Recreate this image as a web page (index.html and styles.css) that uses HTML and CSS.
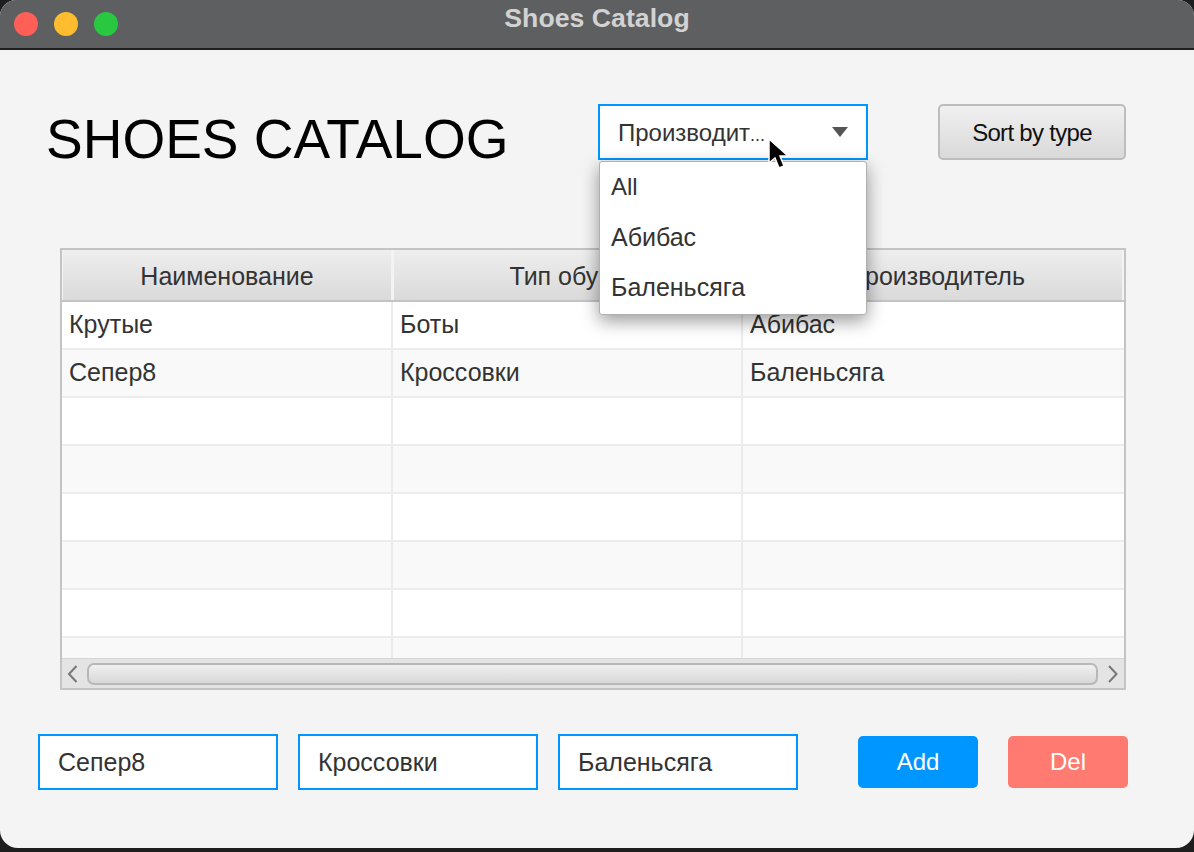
FILE: index.html
```html
<!DOCTYPE html>
<html>
<head>
<meta name="viewport" content="width=device-width, initial-scale=1.0">
<link rel="stylesheet" href="styles.css">
<title>Shoes Catalog</title>
</head>
<body>
<div class="window">
  <div class="titlebar">
    <div class="lights">
      <span class="light red"></span>
      <span class="light yellow"></span>
      <span class="light green"></span>
    </div>
    <div class="wintitle">Shoes Catalog</div>
  </div>
  <div class="content">
    <div class="top">
      <h1 class="heading">SHOES CATALOG</h1>
      <div class="combo">
        <span class="combo-text">Производит<span class="dots">...</span></span>
        <span class="arrow"></span>
        <div class="popup">
          <div class="popup-item latin">All</div>
          <div class="popup-item">Абибас</div>
          <div class="popup-item">Баленьсяга</div>
        </div>
        <svg class="cursor" width="24" height="36" viewBox="0 0 24 36">
          <path d="M3 1 L3 25 L9 20 L13 30 L18 28 L14 18 L22 18 Z" fill="#000" stroke="#fff" stroke-width="1.5"/>
        </svg>
      </div>
      <button class="sort">Sort by type</button>
    </div>
    <div class="table">
      <div class="thead">
        <div class="th c1">Наименование</div>
        <div class="th c2">Тип обуви</div>
        <div class="th c3">Производитель</div>
      </div>
      <div class="tbody">
        <div class="row"><div class="td c1">Крутые</div><div class="td c2">Боты</div><div class="td c3">Абибас</div></div>
        <div class="row odd"><div class="td c1">Сепер8</div><div class="td c2">Кроссовки</div><div class="td c3">Баленьсяга</div></div>
        <div class="row"><div class="td c1"></div><div class="td c2"></div><div class="td c3"></div></div>
        <div class="row odd"><div class="td c1"></div><div class="td c2"></div><div class="td c3"></div></div>
        <div class="row"><div class="td c1"></div><div class="td c2"></div><div class="td c3"></div></div>
        <div class="row odd"><div class="td c1"></div><div class="td c2"></div><div class="td c3"></div></div>
        <div class="row"><div class="td c1"></div><div class="td c2"></div><div class="td c3"></div></div>
        <div class="row odd"><div class="td c1"></div><div class="td c2"></div><div class="td c3"></div></div>
      </div>
      <div class="scrollbar">
        <svg class="sb-arrow" width="25" height="28" viewBox="0 0 25 28"><path d="M14.500 6 L7 14 L14.500 22" fill="none" stroke="#777" stroke-width="2"/></svg>
        <div class="thumb"></div>
        <svg class="sb-arrow" width="26" height="28" viewBox="0 0 26 28"><path d="M11 6 L18.500 14 L11 22" fill="none" stroke="#777" stroke-width="2"/></svg>
      </div>
    </div>
    <div class="bottom">
      <div class="field">Сепер8</div>
      <div class="field">Кроссовки</div>
      <div class="field">Баленьсяга</div>
      <button class="btn add">Add</button>
      <button class="btn del">Del</button>
    </div>
  </div>
</div>
</body>
</html>
```

FILE: styles.css
```css
html, body {
  margin: 0;
  height: 100%;
  background: #1e1e1e;
}
body {
  width: 1194px;
  height: 852px;
  overflow: hidden;
  font-family: "Liberation Sans", Arial, sans-serif;
  font-size: 25px;
  color: #333;
}
.window {
  height: 848px;
  display: flex;
  flex-direction: column;
  border-radius: 16px 16px 18px 18px;
  overflow: hidden;
  background: #f4f4f4;
}
.titlebar {
  height: 48px;
  flex: none;
  display: flex;
  align-items: center;
  background: #5e5f61;
  border-bottom: 2px solid #1f1f1f;
  position: relative;
}
.lights {
  display: flex;
  gap: 16px;
  padding-left: 14px;
}
.light {
  width: 24px;
  height: 24px;
  border-radius: 50%;
}
.red { background: #ff5f57; }
.yellow { background: #febc2e; }
.green { background: #28c840; }
.wintitle {
  position: absolute;
  left: 0;
  right: 0;
  top: 3px;
  text-align: center;
  font-size: 26.7px;
  font-weight: bold;
  color: #d2d2d2;
}
.content {
  flex: 1;
  padding: 54px 66px 0 38px;
}
.top {
  display: flex;
  align-items: flex-start;
  height: 144px;
}
.heading {
  margin: 0;
  width: 543px;
  padding-left: 8px;
  box-sizing: border-box;
  font-size: 55px;
  line-height: 70px;
  font-weight: normal;
  color: #000;
}
.combo {
  width: 270px;
  height: 56px;
  margin-left: 17px;
  box-sizing: border-box;
  border: 2px solid #0096ff;
  background: #fff;
  display: flex;
  align-items: center;
  justify-content: space-between;
  padding: 0 18px;
  position: relative;
}
.combo-text {
  font-size: 24px;
  padding-top: 2px;
}
.dots {
  font-size: 18px;
}
.arrow {
  width: 0;
  height: 0;
  border-left: 8.5px solid transparent;
  border-right: 8.5px solid transparent;
  border-top: 10px solid #555;
}
.popup {
  position: absolute;
  left: -1px;
  top: 55px;
  width: 268px;
  height: 154px;
  box-sizing: border-box;
  background: #fff;
  border: 1px solid #b0b0b0;
  border-radius: 3px;
  box-shadow: 0 6px 18px rgba(0, 0, 0, 0.4);
  z-index: 5;
}
.popup-item {
  height: 50px;
  line-height: 50px;
  padding-left: 11px;
}
.latin {
  font-size: 24px;
}
.cursor {
  position: absolute;
  left: 166px;
  top: 32px;
  z-index: 6;
}
.sort {
  width: 188px;
  height: 56px;
  margin-left: 70px;
  border: 2px solid #bdbdbd;
  border-radius: 5px;
  background: linear-gradient(#f0f0f0, #d9d9d9);
  font-family: inherit;
  font-size: 24px;
  letter-spacing: -0.7px;
  color: #111;
  padding: 2px 0 0;
}
.table {
  margin-left: 22px;
  width: 1066px;
  height: 442px;
  box-sizing: border-box;
  border: 2px solid #c4c4c4;
  display: flex;
  flex-direction: column;
  background: #fff;
}
.thead {
  height: 50px;
  flex: none;
  display: flex;
  border-bottom: 2px solid #c4c4c4;
}
.th {
  box-sizing: border-box;
  padding-top: 2px;
  border-right: 2px solid #f3f3f3;
  border-left: 1px solid #f3f3f3;
  background: linear-gradient(#eeeeee, #dadada);
  display: flex;
  align-items: center;
  justify-content: center;
}
.th.c3 { padding-left: 6px; }
.c1 { width: 331px; flex: none; }
.c2 { width: 350px; flex: none; }
.c3 { flex: 1; }
.tbody {
  height: 356px;
  overflow: hidden;
  flex: none;
}
.row {
  height: 48px;
  box-sizing: border-box;
  display: flex;
  border-bottom: 2px solid #ececec;
  background: #fff;
}
.row.odd { background: #f9f9f9; }
.td {
  box-sizing: border-box;
  border-right: 2px solid #ececec;
  padding-left: 7px;
  line-height: 45px;
}
.td.c3 { border-right: 0; }
.scrollbar {
  flex: 1;
  display: flex;
  align-items: center;
  background: #e4e4e4;
  border-top: 1px solid #d6d6d6;
}
.sb-arrow { flex: none; }
.thumb {
  flex: 1;
  height: 22px;
  box-sizing: border-box;
  border: 2px solid #b8b8b8;
  border-radius: 7px;
  background: linear-gradient(#f0f0f0, #d8d8d8);
}
.bottom {
  display: flex;
  align-items: center;
  margin-top: 44px;
}
.field {
  width: 240px;
  height: 56px;
  margin-right: 20px;
  box-sizing: border-box;
  border: 2px solid #0096ff;
  background: #fff;
  padding-left: 18px;
  line-height: 52px;
}
.btn {
  width: 120px;
  height: 52px;
  border: 0;
  border-radius: 5px;
  color: #fff;
  font-family: inherit;
  font-size: 24px;
  padding: 0;
}
.add {
  background: #0096ff;
  margin-left: 40px;
}
.del {
  background: #ff7a70;
  margin-left: 30px;
}
```
